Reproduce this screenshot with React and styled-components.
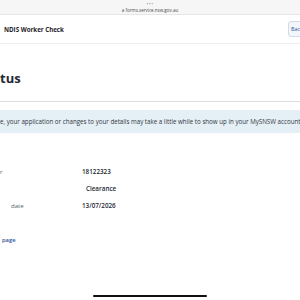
import React from 'react';
import styled, { createGlobalStyle } from 'styled-components';

const GlobalStyle = createGlobalStyle`
  body {
    margin: 0;
    background: #ffffff;
    font-family: "Open Sans", "Liberation Sans", sans-serif;
    color: #242934;
  }
`;

const Page = styled.div`
  width: 300px;
  height: 300px;
  display: flex;
  flex-direction: column;
  overflow: hidden;
  background: #ffffff;
`;

const BrowserBar = styled.div`
  height: 15px;
  flex-shrink: 0;
  display: flex;
  flex-direction: column;
  align-items: center;
  justify-content: center;
  background: #f6f6f6;
  border-bottom: 1px solid #e6e6e6;
  box-sizing: border-box;
`;

const Dots = styled.div`
  font-size: 5px;
  line-height: 5px;
  color: #9a9a9a;
  letter-spacing: 0.5px;
`;

const Url = styled.div`
  font-size: 4.5px;
  line-height: 6px;
  color: #4a4a4a;
`;

const Header = styled.header`
  height: 28px;
  flex-shrink: 0;
  display: flex;
  align-items: center;
  justify-content: space-between;
  padding-left: 4px;
  border-bottom: 1px solid #eeeeee;
`;

const Title = styled.div`
  font-size: 6.2px;
  font-weight: 700;
  color: #1f2228;
`;

const BackButton = styled.button`
  height: 16px;
  width: 24px;
  margin-right: -12px;
  padding: 0 0 0 2px;
  text-align: left;
  border: 1px solid #d3dbe6;
  border-radius: 3px;
  background: #f2f6fb;
  color: #2e5299;
  font-family: inherit;
  font-size: 5.4px;
  white-space: nowrap;
`;

const Main = styled.main`
  display: flex;
  flex-direction: column;
`;

const Heading = styled.h1`
  margin: 26px 0 0;
  font-size: 13px;
  line-height: 16px;
  font-weight: 700;
  color: #242934;
`;

const Divider = styled.hr`
  margin: 15px 0 0;
  border: none;
  border-top: 1px solid #dedede;
`;

const InfoBar = styled.div`
  margin-top: 8px;
  height: 23px;
  display: flex;
  align-items: center;
  background: #e5eff6;
  color: #333840;
  font-size: 6.2px;
  white-space: nowrap;
  overflow: hidden;
`;

const Details = styled.dl`
  margin: 30px 0 0;
  display: grid;
  grid-template-columns: 82px 1fr;
  grid-auto-rows: 17px;
  align-items: center;
`;

const Label = styled.dt`
  font-size: 6px;
  color: #555a63;
  padding-left: ${(p) => p.$indent || 0}px;
`;

const Value = styled.dd`
  margin: 0;
  font-size: 6.3px;
  font-weight: 600;
  color: #242934;
  padding-left: ${(p) => (p.$tag ? 4 : 0)}px;
`;

const PageLink = styled.a`
  margin: 20px 0 0 2px;
  font-size: 5.8px;
  line-height: 12px;
  font-weight: 600;
  color: #2e5299;
  text-decoration: none;
`;

const HomeIndicator = styled.div`
  margin: auto auto 3px;
  width: 114px;
  height: 2px;
  border-radius: 1px;
  background: #111111;
`;

export default function App() {
  return (
    <Page>
      <GlobalStyle />
      <BrowserBar>
        <Dots>•••</Dots>
        <Url>a forms.service.nsw.gov.au</Url>
      </BrowserBar>
      <Header>
        <Title>NDIS Worker Check</Title>
        <BackButton>Back</BackButton>
      </Header>
      <Main>
        <Heading>tus</Heading>
        <Divider />
        <InfoBar>
          e, your application or changes to your details may take a little while to show up in your MySNSW account
        </InfoBar>
        <Details>
          <Label>r</Label>
          <Value>18122323</Value>
          <Label />
          <Value $tag>Clearance</Value>
          <Label $indent={11}>date</Label>
          <Value>13/07/2026</Value>
        </Details>
        <PageLink href="#">page</PageLink>
      </Main>
      <HomeIndicator />
    </Page>
  );
}
